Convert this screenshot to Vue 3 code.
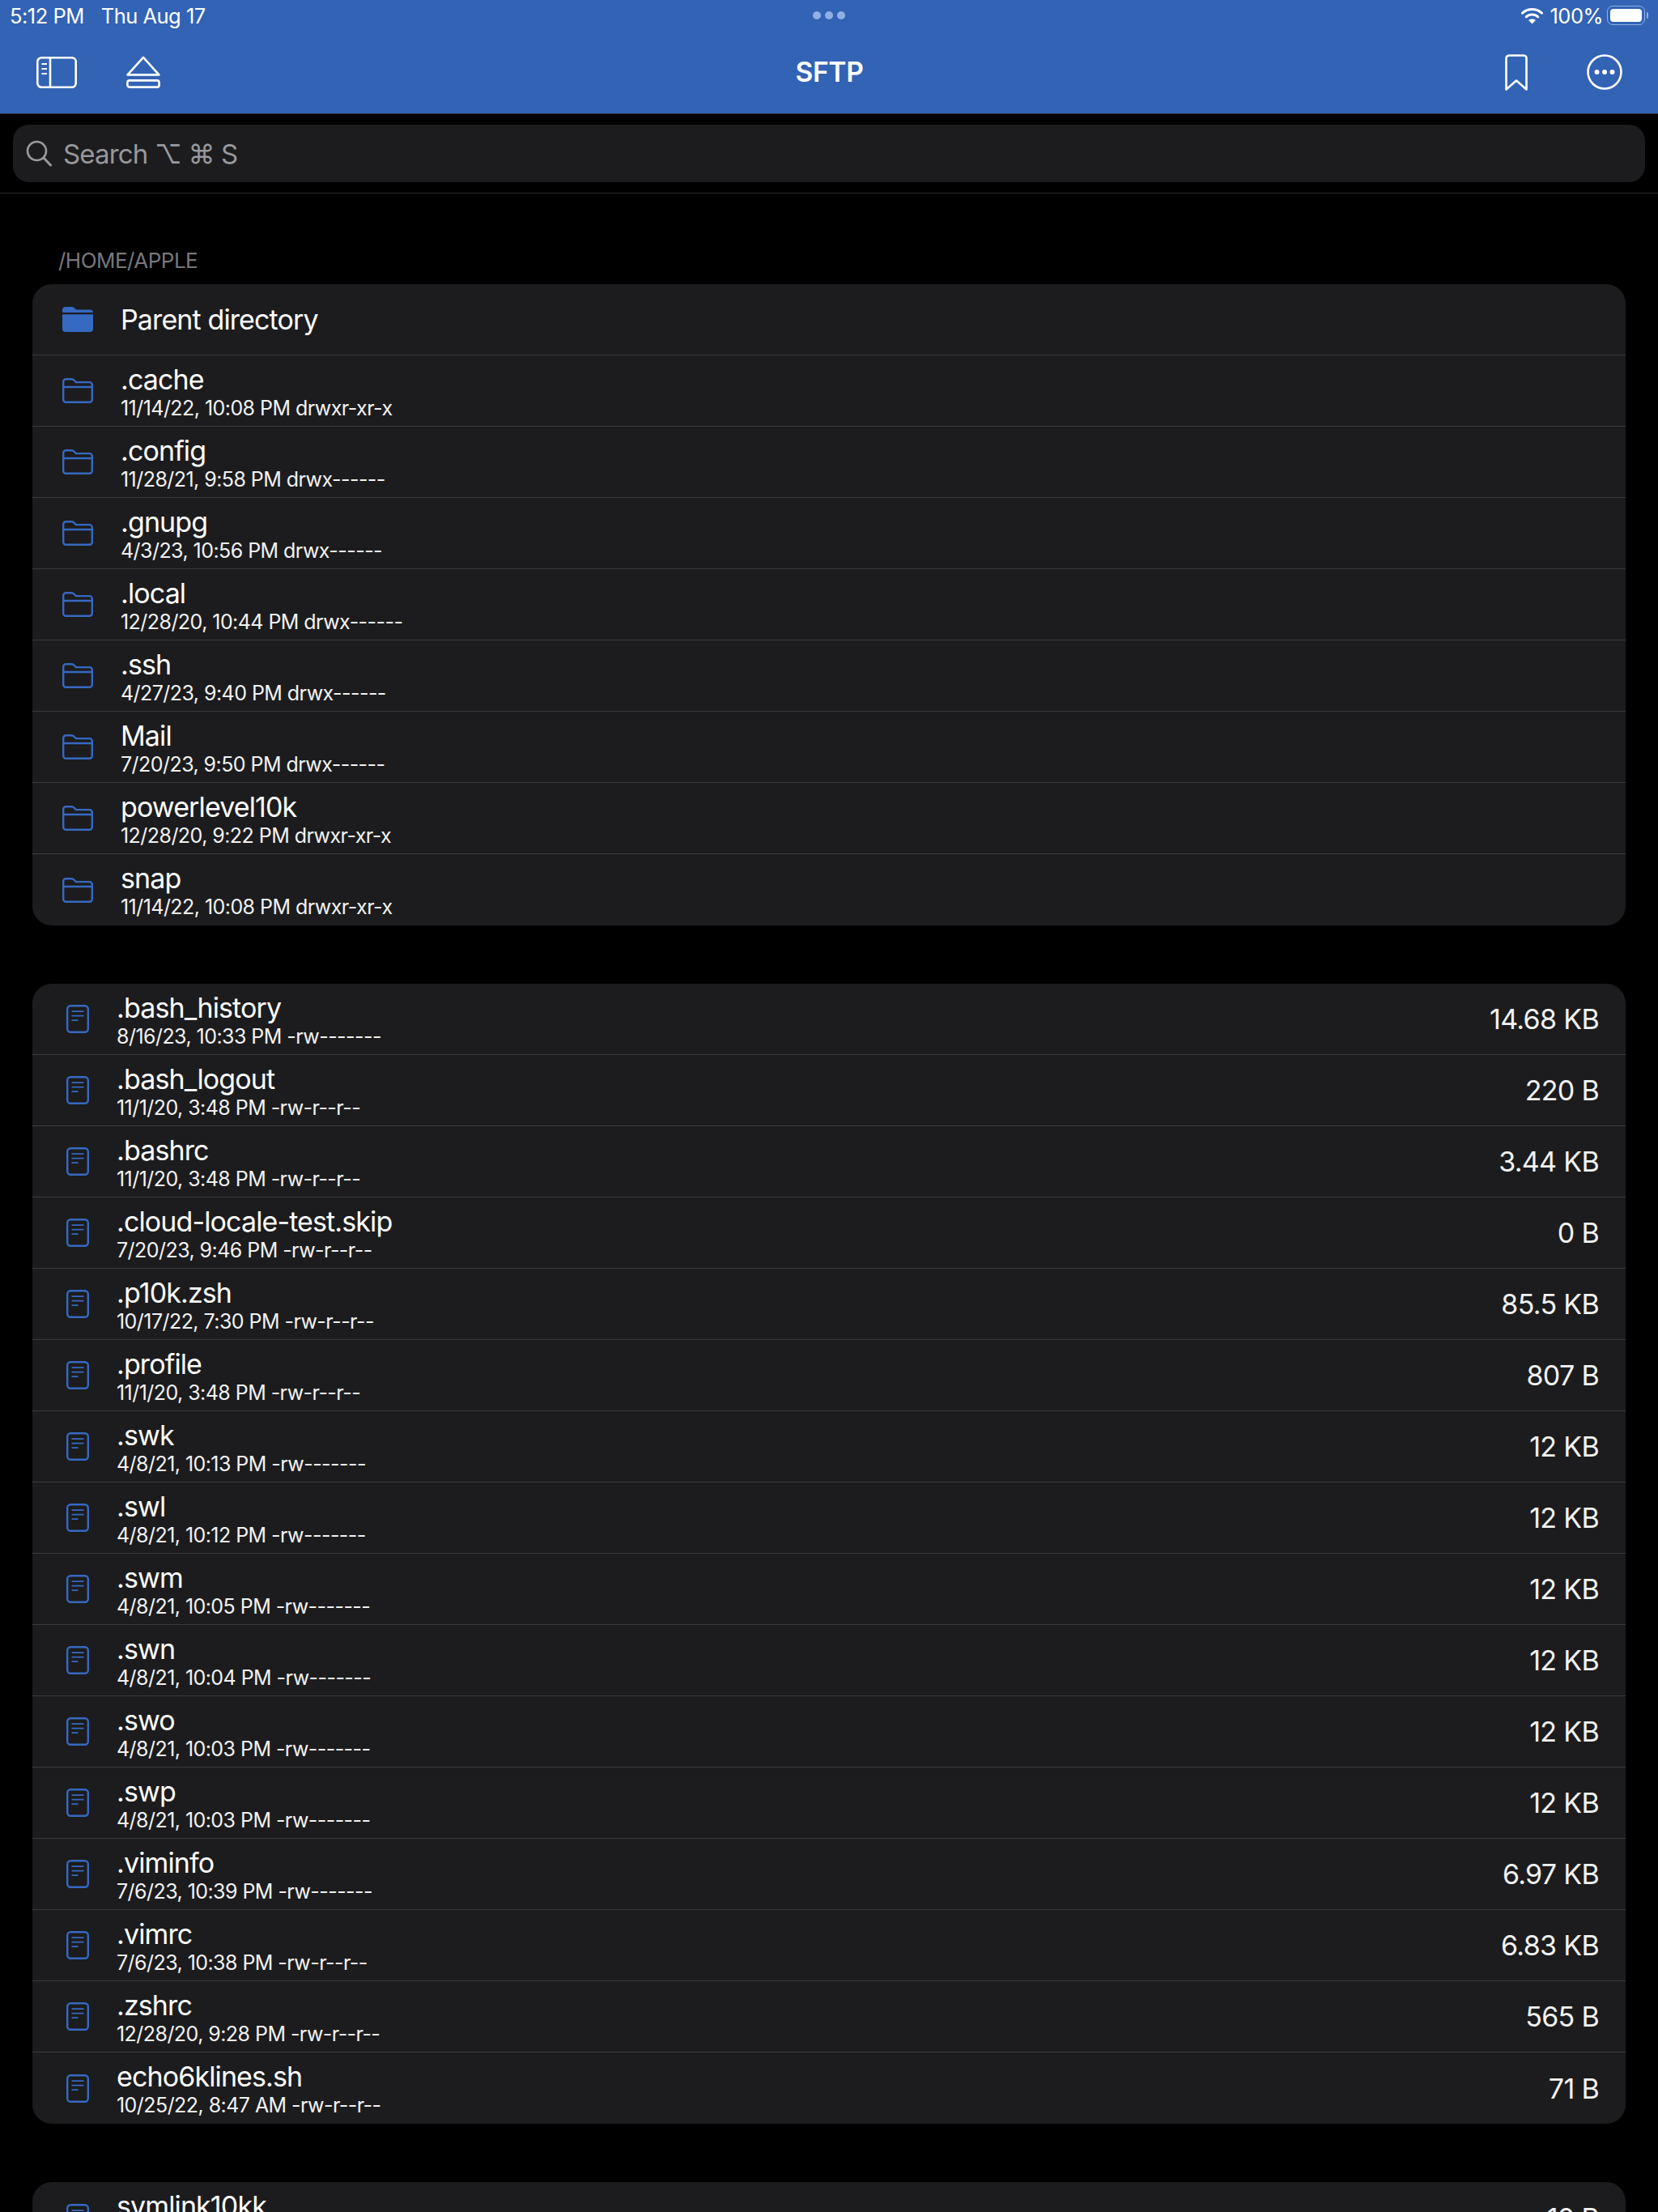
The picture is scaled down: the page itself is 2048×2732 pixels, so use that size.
<template>
  <div class="page">
    <header class="topbar">
      <div class="status">
        <div class="status-left">
          <span>5:12 PM</span>
          <span>Thu Aug 17</span>
        </div>
        <div class="dots"><i></i><i></i><i></i></div>
        <div class="status-right">
          <svg class="wifi" viewBox="0 0 27 21" width="27" height="21">
            <path d="M1.5 7.2C8.2 1 18.8 1 25.5 7.2" fill="none" stroke="#fff" stroke-width="3" stroke-linecap="round" />
            <path d="M6.2 11.8c4-3.6 10.6-3.6 14.6 0" fill="none" stroke="#fff" stroke-width="3" stroke-linecap="round" />
            <path d="M13.5 20.6l-4.4-4.6c2.5-1.9 6.3-1.9 8.8 0z" fill="#fff" />
          </svg>
          <span class="pct">100%</span>
          <div class="battery"><b></b></div>
          <div class="battery-cap"></div>
        </div>
      </div>
      <nav class="nav">
        <div class="nav-left">
          <svg viewBox="0 0 50 39" width="50" height="39" fill="none" stroke="#fff" stroke-width="2.6">
            <rect x="1.3" y="1.3" width="47.4" height="36.4" rx="5" />
            <path d="M17 1.3v36.4" />
            <path d="M6.5 9h6.5M6.5 15h6.5M6.5 21h6.5" stroke-width="2" />
          </svg>
          <svg viewBox="0 0 42 40" width="42" height="40" fill="none" stroke="#fff" stroke-width="2.6" stroke-linejoin="round">
            <path d="M21 1.8L40.4 23.4H1.6z" />
            <rect x="1.4" y="30.4" width="39.2" height="8.2" rx="2.6" />
          </svg>
        </div>
        <div class="title">SFTP</div>
        <div class="nav-right">
          <svg viewBox="0 0 28 45" width="28" height="45" fill="none" stroke="#fff" stroke-width="2.6" stroke-linejoin="round">
            <path d="M1.5 43.5V5a3.5 3.5 0 0 1 3.5-3.5h18a3.5 3.5 0 0 1 3.5 3.5v38.5L14 32.5z" />
          </svg>
          <svg viewBox="0 0 44 44" width="44" height="44">
            <circle cx="22" cy="22" r="20.5" fill="none" stroke="#fff" stroke-width="2.6" />
            <circle cx="12.5" cy="22" r="3" fill="#fff" />
            <circle cx="22" cy="22" r="3" fill="#fff" />
            <circle cx="31.5" cy="22" r="3" fill="#fff" />
          </svg>
        </div>
      </nav>
    </header>

    <div class="search-wrap">
      <div class="search">
        <svg viewBox="0 0 32 33" width="32" height="33" fill="none" stroke="#98989d" stroke-width="2.6" stroke-linecap="round">
          <circle cx="13.5" cy="13.5" r="11.5" />
          <path d="M22 22l8.5 9" stroke-width="3" />
        </svg>
        <span>Search ⌥ ⌘ S</span>
      </div>
    </div>

    <div class="section-label">/HOME/APPLE</div>

    <section class="card">
      <div class="row parent">
        <svg class="folder" viewBox="0 0 38 31" width="38" height="31">
          <path d="M0 7V4a4 4 0 0 1 4-4h7.5c2 0 3 .8 4.2 2l1.6 1.6H34a4 4 0 0 1 4 3.4z" fill="#3669c1" />
          <path d="M0 9.2h38V27a4 4 0 0 1-4 4H4a4 4 0 0 1-4-4z" fill="#3669c1" />
        </svg>
        <div class="name">Parent directory</div>
      </div>
      <div v-for="d in folders" :key="d.name" class="row">
        <svg class="folder" viewBox="0 0 38 31" width="38" height="31" fill="none" stroke="#3669c1" stroke-width="2.4" stroke-linejoin="round">
          <path d="M1.2 26.5V4.5a3.3 3.3 0 0 1 3.3-3.3h6.6c1.8 0 2.7.7 3.8 1.8l2 2.1h16.6a3.3 3.3 0 0 1 3.3 3.3v18.1a3.3 3.3 0 0 1-3.3 3.3H4.5a3.3 3.3 0 0 1-3.3-3.3z" />
          <path d="M1.2 11h35.6" />
        </svg>
        <div class="text">
          <div class="name">{{ d.name }}</div>
          <div class="meta">{{ d.meta }}</div>
        </div>
      </div>
    </section>

    <section class="card">
      <div v-for="f in files" :key="f.name" class="row">
        <svg class="file" viewBox="0 0 28 35" width="28" height="35" fill="none" stroke="#3669c1">
          <rect x="1.2" y="1.2" width="25.6" height="32.6" rx="4" stroke-width="2.4" />
          <path d="M6.5 8.2h15M6.5 13.7h15M6.5 19.2h8" stroke-width="1.8" />
        </svg>
        <div class="text">
          <div class="name">{{ f.name }}</div>
          <div class="meta">{{ f.meta }}</div>
        </div>
        <div class="size">{{ f.size }}</div>
      </div>
    </section>

    <section class="card">
      <div class="row">
        <svg class="file" viewBox="0 0 28 35" width="28" height="35" fill="none" stroke="#3669c1">
          <rect x="1.2" y="1.2" width="25.6" height="32.6" rx="4" stroke-width="2.4" />
          <path d="M6.5 8.2h15M6.5 13.7h15M6.5 19.2h8" stroke-width="1.8" />
        </svg>
        <div class="text">
          <div class="name">symlink10kk</div>
          <div class="meta">10/17/22, 7:30 PM lrwxrwxrwx</div>
        </div>
        <div class="size">10 B</div>
      </div>
    </section>
  </div>
</template>

<script setup>
const folders = [
  { name: '.cache', meta: '11/14/22, 10:08 PM drwxr-xr-x' },
  { name: '.config', meta: '11/28/21, 9:58 PM drwx------' },
  { name: '.gnupg', meta: '4/3/23, 10:56 PM drwx------' },
  { name: '.local', meta: '12/28/20, 10:44 PM drwx------' },
  { name: '.ssh', meta: '4/27/23, 9:40 PM drwx------' },
  { name: 'Mail', meta: '7/20/23, 9:50 PM drwx------' },
  { name: 'powerlevel10k', meta: '12/28/20, 9:22 PM drwxr-xr-x' },
  { name: 'snap', meta: '11/14/22, 10:08 PM drwxr-xr-x' },
]

const files = [
  { name: '.bash_history', meta: '8/16/23, 10:33 PM -rw-------', size: '14.68 KB' },
  { name: '.bash_logout', meta: '11/1/20, 3:48 PM -rw-r--r--', size: '220 B' },
  { name: '.bashrc', meta: '11/1/20, 3:48 PM -rw-r--r--', size: '3.44 KB' },
  { name: '.cloud-locale-test.skip', meta: '7/20/23, 9:46 PM -rw-r--r--', size: '0 B' },
  { name: '.p10k.zsh', meta: '10/17/22, 7:30 PM -rw-r--r--', size: '85.5 KB' },
  { name: '.profile', meta: '11/1/20, 3:48 PM -rw-r--r--', size: '807 B' },
  { name: '.swk', meta: '4/8/21, 10:13 PM -rw-------', size: '12 KB' },
  { name: '.swl', meta: '4/8/21, 10:12 PM -rw-------', size: '12 KB' },
  { name: '.swm', meta: '4/8/21, 10:05 PM -rw-------', size: '12 KB' },
  { name: '.swn', meta: '4/8/21, 10:04 PM -rw-------', size: '12 KB' },
  { name: '.swo', meta: '4/8/21, 10:03 PM -rw-------', size: '12 KB' },
  { name: '.swp', meta: '4/8/21, 10:03 PM -rw-------', size: '12 KB' },
  { name: '.viminfo', meta: '7/6/23, 10:39 PM -rw-------', size: '6.97 KB' },
  { name: '.vimrc', meta: '7/6/23, 10:38 PM -rw-r--r--', size: '6.83 KB' },
  { name: '.zshrc', meta: '12/28/20, 9:28 PM -rw-r--r--', size: '565 B' },
  { name: 'echo6klines.sh', meta: '10/25/22, 8:47 AM -rw-r--r--', size: '71 B' },
]
</script>

<style>
html,
body {
  background: #000;
}
</style>

<style scoped>
.page {
  height: 2732px;
  overflow: hidden;
  background: #000;
  color: #fff;
  font-family: Inter, "DejaVu Sans", sans-serif;
}

.topbar {
  height: 141px;
  background: #3263b4;
  border-bottom: 1px solid #2a2a2c;
  box-sizing: border-box;
}

.status {
  height: 38px;
  padding: 0 12px 0 12px;
  display: grid;
  grid-template-columns: 1fr auto 1fr;
  align-items: center;
  font-size: 25.5px;
  letter-spacing: -0.02em;
}

.status-left {
  display: flex;
  gap: 21px;
}

.dots {
  display: flex;
  gap: 5px;
}

.dots i {
  width: 10px;
  height: 10px;
  border-radius: 50%;
  background: #8fb0e6;
}

.status-right {
  display: flex;
  justify-content: flex-end;
  align-items: center;
}

.wifi {
  margin-right: 8px;
}

.battery {
  margin-left: 5px;
  width: 47px;
  height: 24px;
  box-sizing: border-box;
  padding: 3px;
  border: 1.5px solid #8fb0e6;
  border-radius: 7px;
}

.battery b {
  display: block;
  height: 100%;
  border-radius: 4px;
  background: #fff;
}

.battery-cap {
  width: 2px;
  height: 8px;
  margin-left: 2px;
  border-radius: 0 2px 2px 0;
  background: #8fb0e6;
}

.nav {
  height: 102px;
  padding: 0 44px 12px 45px;
  display: grid;
  grid-template-columns: 1fr auto 1fr;
  align-items: center;
}

.nav-left {
  display: flex;
  align-items: center;
  gap: 61px;
}

.nav-right {
  display: flex;
  justify-content: flex-end;
  align-items: center;
  gap: 73px;
}

.title {
  font-size: 33.5px;
  font-weight: 600;
  letter-spacing: -0.01em;
}

.search-wrap {
  padding: 13px 16px 13px;
  border-bottom: 1px solid #2a2a2c;
}

.search {
  height: 71px;
  padding-left: 16px;
  display: flex;
  align-items: center;
  gap: 14px;
  border-radius: 20px;
  background: #1c1c1e;
  color: #98989d;
  font-size: 33px;
  letter-spacing: -0.025em;
}

.section-label {
  margin: 67px 0 0 72px;
  height: 32px;
  line-height: 32px;
  font-size: 26px;
  letter-spacing: -0.02em;
  color: #77777c;
}

.card {
  margin: 13px 40px 72px;
  border-radius: 24px;
  background: #1c1c1e;
  overflow: hidden;
}

.row {
  height: 88px;
  box-sizing: border-box;
  padding: 0 33px 0 37px;
  display: flex;
  align-items: center;
  border-bottom: 1px solid #3a3a3c;
}

.row:last-child {
  border-bottom: none;
}

.folder {
  flex: none;
  margin-right: 34px;
}

.file {
  flex: none;
  margin: 0 34px 0 5px;
}

.text {
  flex: 1;
  align-self: stretch;
  padding-top: 10px;
}

.name {
  height: 40px;
  line-height: 40px;
  font-size: 34px;
  letter-spacing: -0.026em;
}

.meta {
  margin-top: 1px;
  height: 28px;
  line-height: 28px;
  font-size: 25px;
  letter-spacing: -0.022em;
  color: #f2f2f2;
}

.size {
  font-size: 34px;
  letter-spacing: -0.02em;
  color: #f2f2f2;
}
</style>
